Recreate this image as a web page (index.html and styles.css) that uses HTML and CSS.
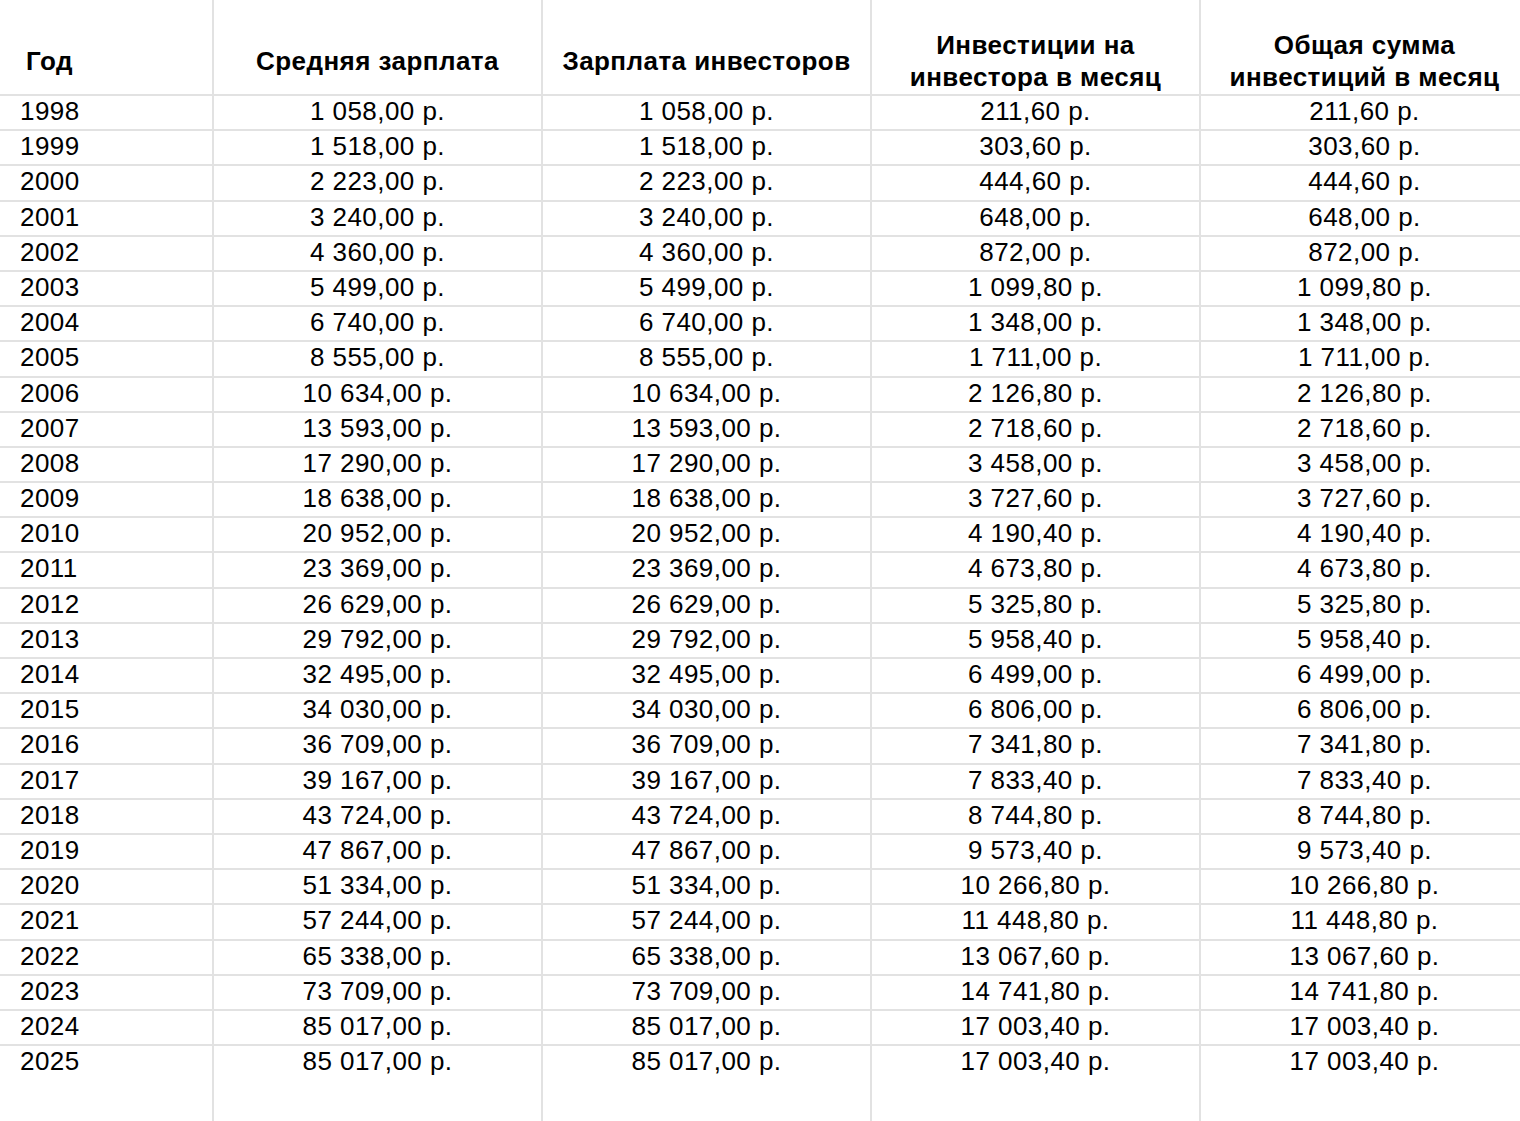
FILE: index.html
```html
<!DOCTYPE html>
<html lang="ru">
<head>
<meta charset="utf-8">
<title>Таблица</title>
<link rel="stylesheet" href="styles.css">
</head>
<body>
<div class="sheet">
  <div class="hd first">Год</div>
  <div class="hd">Средняя зарплата</div>
  <div class="hd">Зарплата инвесторов</div>
  <div class="hd">Инвестиции на<br>инвестора в месяц</div>
  <div class="hd">Общая сумма<br>инвестиций в месяц</div>

  <div class="c first">1998</div><div class="c">1 058,00 р.</div><div class="c">1 058,00 р.</div><div class="c">211,60 р.</div><div class="c">211,60 р.</div>
  <div class="c first">1999</div><div class="c">1 518,00 р.</div><div class="c">1 518,00 р.</div><div class="c">303,60 р.</div><div class="c">303,60 р.</div>
  <div class="c first">2000</div><div class="c">2 223,00 р.</div><div class="c">2 223,00 р.</div><div class="c">444,60 р.</div><div class="c">444,60 р.</div>
  <div class="c first">2001</div><div class="c">3 240,00 р.</div><div class="c">3 240,00 р.</div><div class="c">648,00 р.</div><div class="c">648,00 р.</div>
  <div class="c first">2002</div><div class="c">4 360,00 р.</div><div class="c">4 360,00 р.</div><div class="c">872,00 р.</div><div class="c">872,00 р.</div>
  <div class="c first">2003</div><div class="c">5 499,00 р.</div><div class="c">5 499,00 р.</div><div class="c">1 099,80 р.</div><div class="c">1 099,80 р.</div>
  <div class="c first">2004</div><div class="c">6 740,00 р.</div><div class="c">6 740,00 р.</div><div class="c">1 348,00 р.</div><div class="c">1 348,00 р.</div>
  <div class="c first">2005</div><div class="c">8 555,00 р.</div><div class="c">8 555,00 р.</div><div class="c">1 711,00 р.</div><div class="c">1 711,00 р.</div>
  <div class="c first">2006</div><div class="c">10 634,00 р.</div><div class="c">10 634,00 р.</div><div class="c">2 126,80 р.</div><div class="c">2 126,80 р.</div>
  <div class="c first">2007</div><div class="c">13 593,00 р.</div><div class="c">13 593,00 р.</div><div class="c">2 718,60 р.</div><div class="c">2 718,60 р.</div>
  <div class="c first">2008</div><div class="c">17 290,00 р.</div><div class="c">17 290,00 р.</div><div class="c">3 458,00 р.</div><div class="c">3 458,00 р.</div>
  <div class="c first">2009</div><div class="c">18 638,00 р.</div><div class="c">18 638,00 р.</div><div class="c">3 727,60 р.</div><div class="c">3 727,60 р.</div>
  <div class="c first">2010</div><div class="c">20 952,00 р.</div><div class="c">20 952,00 р.</div><div class="c">4 190,40 р.</div><div class="c">4 190,40 р.</div>
  <div class="c first">2011</div><div class="c">23 369,00 р.</div><div class="c">23 369,00 р.</div><div class="c">4 673,80 р.</div><div class="c">4 673,80 р.</div>
  <div class="c first">2012</div><div class="c">26 629,00 р.</div><div class="c">26 629,00 р.</div><div class="c">5 325,80 р.</div><div class="c">5 325,80 р.</div>
  <div class="c first">2013</div><div class="c">29 792,00 р.</div><div class="c">29 792,00 р.</div><div class="c">5 958,40 р.</div><div class="c">5 958,40 р.</div>
  <div class="c first">2014</div><div class="c">32 495,00 р.</div><div class="c">32 495,00 р.</div><div class="c">6 499,00 р.</div><div class="c">6 499,00 р.</div>
  <div class="c first">2015</div><div class="c">34 030,00 р.</div><div class="c">34 030,00 р.</div><div class="c">6 806,00 р.</div><div class="c">6 806,00 р.</div>
  <div class="c first">2016</div><div class="c">36 709,00 р.</div><div class="c">36 709,00 р.</div><div class="c">7 341,80 р.</div><div class="c">7 341,80 р.</div>
  <div class="c first">2017</div><div class="c">39 167,00 р.</div><div class="c">39 167,00 р.</div><div class="c">7 833,40 р.</div><div class="c">7 833,40 р.</div>
  <div class="c first">2018</div><div class="c">43 724,00 р.</div><div class="c">43 724,00 р.</div><div class="c">8 744,80 р.</div><div class="c">8 744,80 р.</div>
  <div class="c first">2019</div><div class="c">47 867,00 р.</div><div class="c">47 867,00 р.</div><div class="c">9 573,40 р.</div><div class="c">9 573,40 р.</div>
  <div class="c first">2020</div><div class="c">51 334,00 р.</div><div class="c">51 334,00 р.</div><div class="c">10 266,80 р.</div><div class="c">10 266,80 р.</div>
  <div class="c first">2021</div><div class="c">57 244,00 р.</div><div class="c">57 244,00 р.</div><div class="c">11 448,80 р.</div><div class="c">11 448,80 р.</div>
  <div class="c first">2022</div><div class="c">65 338,00 р.</div><div class="c">65 338,00 р.</div><div class="c">13 067,60 р.</div><div class="c">13 067,60 р.</div>
  <div class="c first">2023</div><div class="c">73 709,00 р.</div><div class="c">73 709,00 р.</div><div class="c">14 741,80 р.</div><div class="c">14 741,80 р.</div>
  <div class="c first">2024</div><div class="c">85 017,00 р.</div><div class="c">85 017,00 р.</div><div class="c">17 003,40 р.</div><div class="c">17 003,40 р.</div>
  <div class="c first">2025</div><div class="c">85 017,00 р.</div><div class="c">85 017,00 р.</div><div class="c">17 003,40 р.</div><div class="c">17 003,40 р.</div>

  <div class="f first"></div><div class="f"></div><div class="f"></div><div class="f"></div><div class="f"></div>
</div>
</body>
</html>
```

FILE: styles.css
```css
html, body {
  margin: 0;
  padding: 0;
  background: #ffffff;
  overflow: hidden;
}

.sheet {
  display: grid;
  grid-template-columns: 212px 329px 329px 329px 329px;
  grid-template-rows: 94px repeat(28, 35.2px) 1fr;
  width: 1528px;
  min-height: 1121px;
  font-family: "Liberation Sans", Arial, sans-serif;
  font-size: 26px;
  color: #000000;
  letter-spacing: 0.45px;
}

.hd, .c, .f {
  box-sizing: border-box;
  border-left: 2px solid #e2e2e2;
  white-space: nowrap;
}

.first {
  border-left: none;
}

.hd {
  font-weight: bold;
  text-align: center;
  display: flex;
  flex-direction: column;
  justify-content: center;
  padding-top: 28px;
  line-height: 32px;
}

.hd.first {
  text-align: left;
  padding-left: 26px;
}

.c {
  border-top: 2px solid #e2e2e2;
  text-align: center;
  line-height: 30px;
}

.c.first {
  text-align: left;
  padding-left: 20px;
}
```
